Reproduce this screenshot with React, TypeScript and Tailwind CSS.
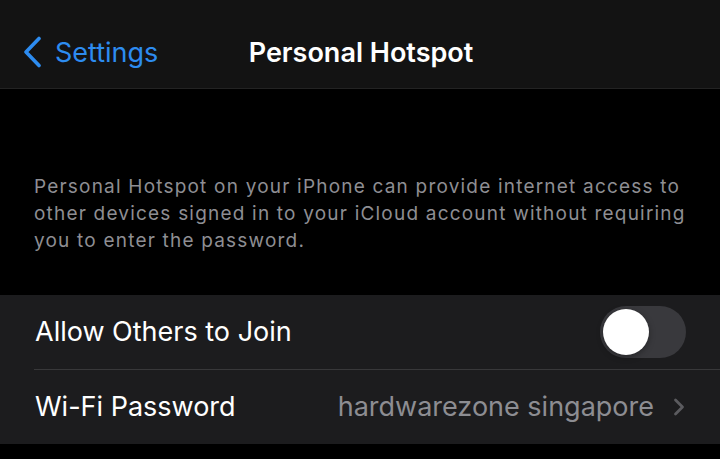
import { useState } from 'react';

function Toggle({ on, onChange }: { on: boolean; onChange: (v: boolean) => void }) {
  return (
    <button
      type="button"
      role="switch"
      aria-checked={on}
      onClick={() => onChange(!on)}
      className={`relative flex h-[52px] w-[86px] items-center rounded-full p-[3px] ${on ? 'bg-[#32d74b]' : 'bg-[#39393d]'}`}
    >
      <span
        className={`block h-[46px] w-[46px] rounded-full bg-white shadow-[0_2px_6px_rgba(0,0,0,0.35)] ${on ? 'translate-x-[34px]' : 'translate-x-0'}`}
      />
    </button>
  );
}

export default function App() {
  const [allowOthers, setAllowOthers] = useState(false);

  return (
    <div className="h-[459px] w-[720px] overflow-hidden bg-black font-['Inter',sans-serif] antialiased">
      {/* Barre de navigation */}
      <div className="flex h-[89px] items-center border-b border-[#232323] bg-[#131313] pl-[22px] pr-[20px] pt-[16px]">
        <div className="flex w-[200px] items-center gap-[13px] text-[#2d8cf0]">
          <svg width="20" height="32" viewBox="0 0 20 32" fill="none">
            <path d="M17 2.5 L4 16 L17 29.5" stroke="currentColor" strokeWidth="3.6" strokeLinecap="round" strokeLinejoin="round" />
          </svg>
          <span className="text-[27px] leading-none">Settings</span>
        </div>
        <div className="flex-1 text-center text-[27px] font-semibold leading-none text-white">Personal Hotspot</div>
        <div className="w-[200px]" />
      </div>

      {/* Texte explicatif */}
      <div className="px-[34px] pb-[41px] pt-[84px] text-[19px] leading-[27px] tracking-[1.2px] text-[#8e8e93]">
        Personal Hotspot on your iPhone can provide internet access to other devices signed in to your iCloud account without requiring you to enter the password.
      </div>

      {/* Réglages */}
      <div className="bg-[#1c1c1e]">
        <div className="flex h-[74px] items-center justify-between pl-[35px] pr-[34px]">
          <span className="text-[27px] text-white">Allow Others to Join</span>
          <Toggle on={allowOthers} onChange={setAllowOthers} />
        </div>
        <div className="ml-[34px] h-px bg-[#38383a]" />
        <div className="flex h-[74px] items-center justify-between pl-[35px] pr-[35px]">
          <span className="text-[27px] text-white">Wi-Fi Password</span>
          <div className="flex items-center gap-[19px]">
            <span className="text-[27px] text-[#8d8d92]">hardwarezone singapore</span>
            <svg width="12" height="18" viewBox="0 0 12 18" fill="none">
              <path d="M2.5 2 L9.5 9 L2.5 16" stroke="#5b5b5f" strokeWidth="2.8" strokeLinecap="round" strokeLinejoin="round" />
            </svg>
          </div>
        </div>
      </div>
    </div>
  );
}
